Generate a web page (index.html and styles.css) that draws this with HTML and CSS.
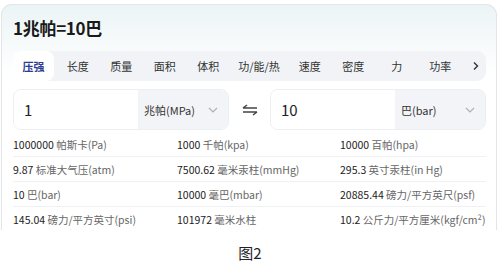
FILE: index.html
```html
<!DOCTYPE html>
<html>
<head>
  <meta charset="utf-8" />
  <title>压强换算</title>
  <link rel="stylesheet" href="styles.css">
</head>
<body>
<div class="card">
  <h1 class="title">1兆帕=10巴</h1>

  <div class="tabs">
    <span class="tab active">压强</span>
    <span class="tab">长度</span>
    <span class="tab">质量</span>
    <span class="tab">面积</span>
    <span class="tab">体积</span>
    <span class="tab wide">功/能/热</span>
    <span class="tab">速度</span>
    <span class="tab">密度</span>
    <span class="tab">力</span>
    <span class="tab">功率</span>
    <span class="tab more">
      <svg width="8" height="10" viewBox="0 0 8 10"><path d="M2 1.5 L5.5 5 L2 8.5" fill="none" stroke="#333" stroke-width="1.4"/></svg>
    </span>
  </div>

  <div class="convert">
    <div class="field">
      <div class="value">1</div>
      <div class="unit">兆帕(MPa)
        <svg width="10" height="6" viewBox="0 0 10 6"><path d="M1 1 L5 5 L9 1" fill="none" stroke="#aab0b8" stroke-width="1.1"/></svg>
      </div>
    </div>
    <div class="swap">
      <svg width="16" height="12" viewBox="0 0 16 12"><path d="M1 4 H15 M1 4 L5 1" fill="none" stroke="#444" stroke-width="1.4"/><path d="M15 8 H1 M15 8 L11 11" fill="none" stroke="#444" stroke-width="1.4"/></svg>
    </div>
    <div class="field">
      <div class="value">10</div>
      <div class="unit">巴(bar)
        <svg width="10" height="6" viewBox="0 0 10 6"><path d="M1 1 L5 5 L9 1" fill="none" stroke="#aab0b8" stroke-width="1.1"/></svg>
      </div>
    </div>
  </div>

  <div class="results">
    <div class="cell"><b>1000000</b> 帕斯卡(Pa)</div>
    <div class="cell"><b>1000</b> 千帕(kpa)</div>
    <div class="cell"><b>10000</b> 百帕(hpa)</div>
    <div class="cell"><b>9.87</b> 标准大气压(atm)</div>
    <div class="cell"><b>7500.62</b> 毫米汞柱(mmHg)</div>
    <div class="cell"><b>295.3</b> 英寸汞柱(in Hg)</div>
    <div class="cell"><b>10</b> 巴(bar)</div>
    <div class="cell"><b>10000</b> 毫巴(mbar)</div>
    <div class="cell"><b>20885.44</b> 磅力/平方英尺(psf)</div>
    <div class="cell"><b>145.04</b> 磅力/平方英寸(psi)</div>
    <div class="cell"><b>101972</b> 毫米水柱</div>
    <div class="cell"><b>10.2</b> 公斤力/平方厘米(kgf/cm²)</div>
  </div>
</div>
<div class="caption">图2</div>
</body>
</html>
```

FILE: styles.css
```css
body {
  margin: 0;
  background: #fff;
  font-family: "Noto Sans CJK SC", "Liberation Sans", sans-serif;
  color: #222;
}

.card {
  margin: 4px 3px 0 1px;
  height: 226px;
  box-sizing: border-box;
  padding: 12px 10px 0 11px;
  border: 1px solid #e2e6ea;
  border-bottom: none;
  border-radius: 11px 11px 0 0;
  background: linear-gradient(180deg, #ebf4f6 0px, #f7fafb 40px, #fff 70px);
}

.title {
  margin: 0;
  font-size: 17px;
  line-height: 22px;
  font-weight: bold;
  color: #1a1a1a;
  letter-spacing: -0.3px;
}

.tabs {
  margin-top: 12px;
  display: flex;
  align-items: center;
  height: 30px;
  background: #f1f3f6;
  border-radius: 9px;
  font-size: 11px;
  color: #333;
}

.tab {
  width: 43.5px;
  text-align: center;
  line-height: 30px;
  flex: none;
}

.tab.wide {
  width: 58px;
}

.tab.active {
  width: 41px;
  background: #fff;
  border-radius: 8px;
  color: #2b3d8f;
  font-weight: bold;
  margin-right: 2px;
}

.tab.more {
  width: 28px;
  display: flex;
  align-items: center;
  justify-content: center;
}

.convert {
  margin-top: 8px;
  display: flex;
  align-items: center;
}

.field {
  width: 216px;
  height: 41px;
  display: flex;
  border: 1px solid #eceef1;
  border-radius: 8px;
  overflow: hidden;
  box-sizing: border-box;
}

.value {
  flex: 1;
  background: #fff;
  font-size: 15px;
  line-height: 39px;
  padding-left: 10px;
  color: #222;
}

.unit {
  width: 90px;
  background: #f3f4f7;
  font-size: 11px;
  color: #333;
  display: flex;
  align-items: center;
  justify-content: space-between;
  padding: 0 10px 0 6px;
  box-sizing: border-box;
}

.swap {
  width: 41px;
  display: flex;
  justify-content: center;
}

.results {
  margin-top: 2px;
  display: grid;
  grid-template-columns: 164px 163px 1fr;
  font-size: 10.5px;
  color: #666;
}

.cell {
  height: 25px;
  line-height: 25px;
  border-bottom: 1px solid #f0f1f3;
  box-sizing: border-box;
  white-space: nowrap;
}

.cell:nth-last-child(-n+3) {
  border-bottom: none;
}

.cell b {
  font-weight: normal;
  color: #222;
}

.caption {
  text-align: center;
  font-size: 15px;
  line-height: 18px;
  margin-top: 14px;
  color: #222;
}
```
